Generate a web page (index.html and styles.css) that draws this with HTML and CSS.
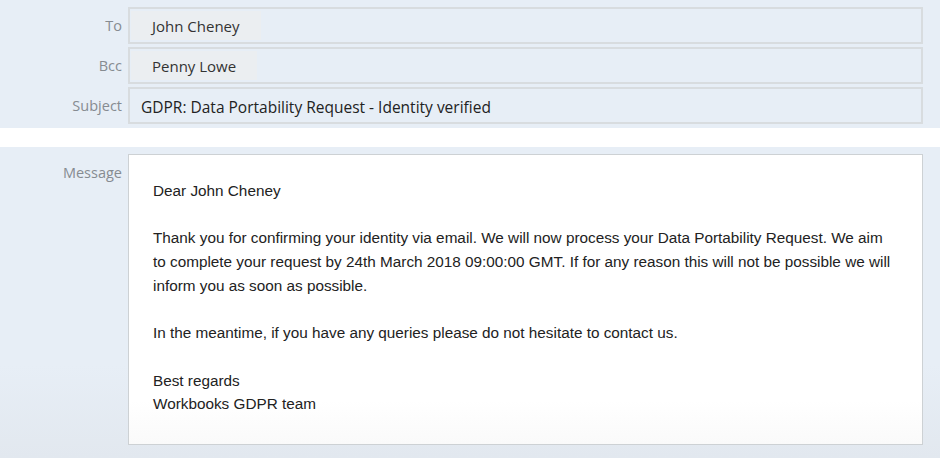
FILE: index.html
```html
<!DOCTYPE html>
<html lang="en">
<head>
  <meta charset="UTF-8" />
  <title>Email</title>
  <link rel="stylesheet" href="styles.css">
</head>
<body>
  <div class="panel header-panel">
    <div class="row">
      <div class="label">To</div>
      <div class="field"><span class="chip">John Cheney</span></div>
    </div>
    <div class="row">
      <div class="label">Bcc</div>
      <div class="field"><span class="chip">Penny Lowe</span></div>
    </div>
    <div class="row">
      <div class="label">Subject</div>
      <div class="field subject">GDPR: Data Portability Request - Identity verified</div>
    </div>
  </div>

  <div class="panel message-panel">
    <div class="row message-row">
      <div class="label">Message</div>
      <div class="message-box">
        <p>Dear John Cheney</p>
        <p>Thank you for confirming your identity via email. We will now process your Data Portability Request. We aim to complete your request by 24th March 2018 09:00:00 GMT. If for any reason this will not be possible we will inform you as soon as possible.</p>
        <p>In the meantime, if you have any queries please do not hesitate to contact us.</p>
        <p>Best regards<br>Workbooks GDPR team</p>
      </div>
    </div>
  </div>
</body>
</html>
```

FILE: styles.css
```css
body {
  margin: 0;
  background: white;
  font-family: 'Open Sans', 'Liberation Sans', sans-serif;
}

.panel {
  background-color: #e7eef6;
}

.header-panel {
  padding: 7px 17px 4px 0;
  display: flex;
  flex-direction: column;
  gap: 3px;
}

.message-panel {
  margin-top: 19px;
  padding: 7px 17px 13px 0;
  background: linear-gradient(to bottom, #e7eef6 70%, #e2e8ef);
}

.row {
  display: flex;
  align-items: stretch;
}

.label {
  width: 122px;
  padding-right: 6px;
  text-align: right;
  font-size: 14.5px;
  color: #868b91;
  line-height: 37px;
}

.field {
  flex: 1;
  height: 33px;
  border: 2px solid #d8dcdf;
  display: flex;
  align-items: center;
  padding-left: 1px;
}

.chip {
  background-color: #ebeef1;
  color: #333;
  font-size: 15px;
  height: 29px;
  line-height: 31px;
  padding: 0 21px;
}

.subject {
  padding-left: 11px;
  padding-top: 2px;
  height: 31px;
  font-size: 15.5px;
  color: #222;
}

.message-row .label {
  line-height: 20px;
  padding-top: 9px;
}

.message-box {
  flex: 1;
  height: 265px;
  background: linear-gradient(to bottom, white 85%, #fafafa);
  border: 1px solid #cdd1d4;
  padding: 24px 25px 0 24px;
  font-family: 'Liberation Sans', Arial, sans-serif;
  font-size: 15.3px;
  line-height: 23.7px;
  color: #222;
}

.message-box p {
  margin: 0 0 23.7px;
}
```
